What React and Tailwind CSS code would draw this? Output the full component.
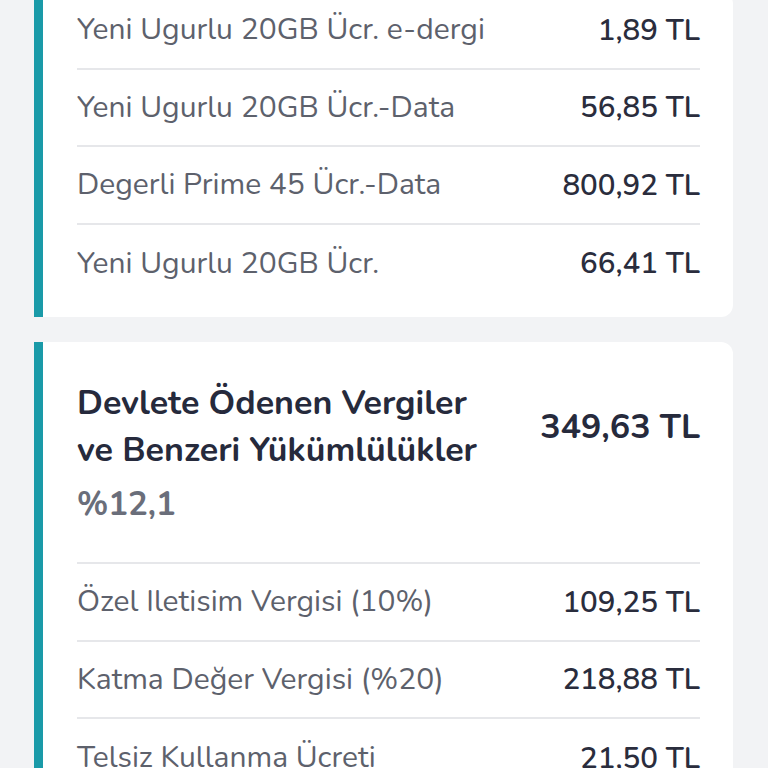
import React from 'react';

const fontStack = { fontFamily: '"Nunito", "Lato", "Open Sans", sans-serif' };

const topRows = [
  { label: 'Yeni Ugurlu 20GB Ücr. e-dergi', value: '1,89 TL' },
  { label: 'Yeni Ugurlu 20GB Ücr.-Data', value: '56,85 TL' },
  { label: 'Degerli Prime 45 Ücr.-Data', value: '800,92 TL' },
  { label: 'Yeni Ugurlu 20GB Ücr.', value: '66,41 TL' },
];

const taxRows = [
  { label: 'Özel Iletisim Vergisi (10%)', value: '109,25 TL' },
  { label: 'Katma Değer Vergisi (%20)', value: '218,88 TL' },
  { label: 'Telsiz Kullanma Ücreti', value: '21,50 TL' },
];

const Row = ({ label, value, last }) => (
  <div
    className={`flex items-center justify-between h-[77.5px] ${last ? '' : 'border-b-2 border-[#e6e7ea]'}`}
  >
    <span className="text-[30px] text-[#5d616c] font-normal">{label}</span>
    <span className="text-[29.5px] text-[#2a2d3d] font-semibold">{value}</span>
  </div>
);

const App = () => {
  return (
    <div className="w-[768px] h-[768px] overflow-hidden bg-[#f2f3f5] pl-[34px] pr-[35px]" style={fontStack}>
      {/* Charges card (top cut off) */}
      <div className="-mt-[8px] bg-white rounded-r-xl border-l-[9px] border-[#1a9aa8] pl-[34px] pr-[33px] pb-[15px]">
        {topRows.map((r, i) => (
          <Row key={r.label} {...r} last={i === topRows.length - 1} />
        ))}
      </div>

      {/* Taxes card */}
      <div className="mt-[25px] bg-white rounded-r-xl border-l-[9px] border-[#1a9aa8] pl-[34px] pr-[33px]">
        <div className="flex justify-between pt-[38px] pb-[32px] border-b-2 border-[#e6e7ea]">
          <div>
            <h2 className="text-[34px] leading-[47px] font-bold text-[#262a3c]">
              Devlete Ödenen Vergiler
              <br />
              ve Benzeri Yükümlülükler
            </h2>
            <p className="mt-[6px] text-[33px] leading-[50px] font-bold text-[#6a6e7a]">%12,1</p>
          </div>
          <div className="mt-[24px] text-[34px] leading-[47px] font-bold text-[#262a3c] shrink-0">349,63 TL</div>
        </div>
        {taxRows.map((r, i) => (
          <Row key={r.label} {...r} last={i === taxRows.length - 1} />
        ))}
      </div>
    </div>
  );
};

export default App;
